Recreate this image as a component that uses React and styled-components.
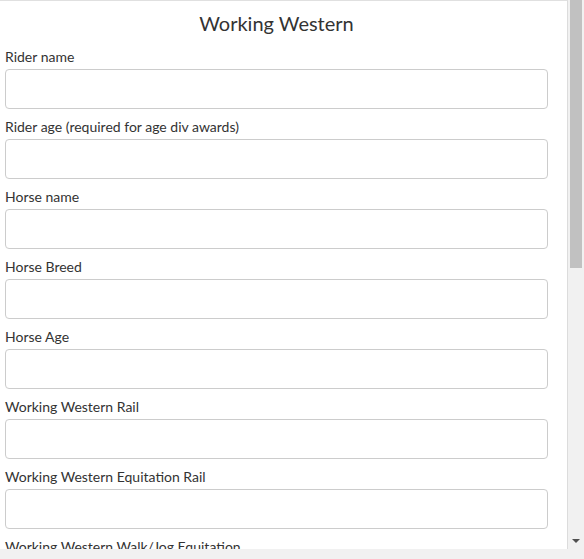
import styled, { createGlobalStyle } from "styled-components";

const fields = [
  "Rider name",
  "Rider age (required for age div awards)",
  "Horse name",
  "Horse Breed",
  "Horse Age",
  "Working Western Rail",
  "Working Western Equitation Rail",
  "Working Western Walk/Jog Equitation",
  "Working Western Walk/Jog Rail",
  "Working Western Trail",
];

export default function App() {
  return (
    <>
      <Global />
      <Frame>
        <Panel>
          <Title>Working Western</Title>
          {fields.map((f) => (
            <Group key={f}>
              <Label>{f}</Label>
              <Input type="text" />
            </Group>
          ))}
        </Panel>
        <ScrollBar>
          <Thumb />
          <Arrow />
        </ScrollBar>
      </Frame>
    </>
  );
}

const Global = createGlobalStyle`
  html, body {
    margin: 0;
    padding: 0;
    background: #f1f1f1;
    overflow: hidden;
  }
  * { box-sizing: border-box; }
`;

const Frame = styled.div`
  display: flex;
  height: 549px;
  width: 584px;
  font-family: Lato, "Liberation Sans", sans-serif;
`;

const Panel = styled.div`
  width: 568px;
  flex: none;
  overflow: hidden;
  background: #fff;
  border-top: 1px solid #e0e0e0;
  border-right: 1px solid #dcdcdc;
  padding: 0 19px 0 5px;
`;

const ScrollBar = styled.div`
  flex: 1;
  display: flex;
  flex-direction: column;
  justify-content: space-between;
  background: #f1f1f1;
`;

const Thumb = styled.div`
  height: 268px;
  margin: 0 2px;
  background: #c1c1c1;
`;

const Arrow = styled.div`
  height: 14px;
  margin-bottom: 1px;
  display: flex;
  align-items: center;
  justify-content: center;

  &::after {
    content: "";
    border-left: 4px solid transparent;
    border-right: 4px solid transparent;
    border-top: 4px solid #505050;
  }
`;

const Title = styled.h1`
  margin: 0;
  padding-top: 8px;
  height: 49px;
  text-align: center;
  font-weight: 400;
  font-size: 20px;
  line-height: 28px;
  color: #333;
`;

const Group = styled.div`
  & + & {
    margin-top: 11px;
  }
`;

const Label = styled.label`
  display: block;
  font-size: 14px;
  line-height: 14px;
  color: #333;
  margin-bottom: 5px;
`;

const Input = styled.input`
  display: block;
  width: 100%;
  height: 40px;
  border: 1px solid #ccc;
  border-radius: 4px;
  background: #fff;
  padding: 6px 12px;
  font-size: 14px;
  outline: none;
`;
